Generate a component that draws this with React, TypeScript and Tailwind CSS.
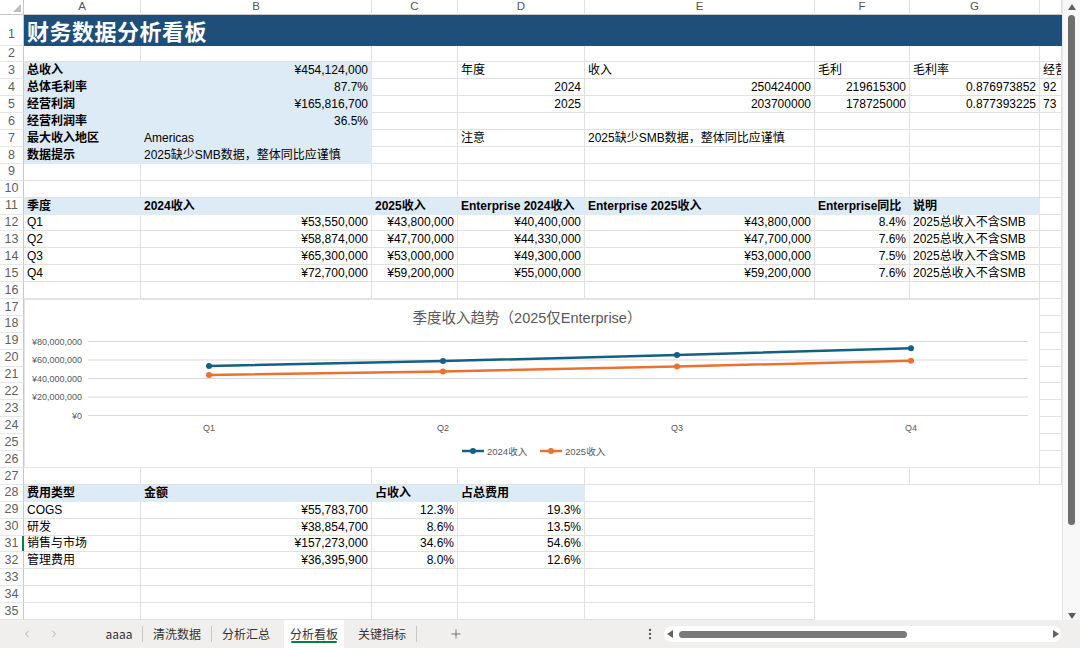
import React from 'react';
import clsx from 'clsx';
import { ChevronLeft, ChevronRight, Plus, EllipsisVertical } from 'lucide-react';

type Cell = { v?: string; r?: boolean; b?: boolean; fill?: boolean; none?: boolean };

const colW = ['w-[117px]', 'w-[231px]', 'w-[86px]', 'w-[127px]', 'w-[230px]', 'w-[95px]', 'w-[130px]', 'w-[22px]'];
const letters = ['A', 'B', 'C', 'D', 'E', 'F', 'G', ''];

const t = (v: string): Cell => ({ v });
const n = (v: string): Cell => ({ v, r: true });
const fb = (v: string): Cell => ({ v, b: true, fill: true });
const fn = (v: string): Cell => ({ v, r: true, fill: true });
const ft = (v: string): Cell => ({ v, fill: true });
const E: Cell = {};
const X: Cell = { none: true };

const rows: Record<number, Cell[]> = {
  3: [fb('总收入'), fn('¥454,124,000'), E, t('年度'), t('收入'), t('毛利'), t('毛利率'), t('经营利润')],
  4: [fb('总体毛利率'), fn('87.7%'), E, n('2024'), n('250424000'), n('219615300'), n('0.876973852'), t('92')],
  5: [fb('经营利润'), fn('¥165,816,700'), E, n('2025'), n('203700000'), n('178725000'), n('0.877393225'), t('73')],
  6: [fb('经营利润率'), fn('36.5%')],
  7: [fb('最大收入地区'), ft('Americas'), E, t('注意'), t('2025缺少SMB数据，整体同比应谨慎')],
  8: [fb('数据提示'), ft('2025缺少SMB数据，整体同比应谨慎')],
  11: [fb('季度'), fb('2024收入'), fb('2025收入'), fb('Enterprise 2024收入'), fb('Enterprise 2025收入'), fb('Enterprise同比'), fb('说明')],
  12: [t('Q1'), n('¥53,550,000'), n('¥43,800,000'), n('¥40,400,000'), n('¥43,800,000'), n('8.4%'), t('2025总收入不含SMB')],
  13: [t('Q2'), n('¥58,874,000'), n('¥47,700,000'), n('¥44,330,000'), n('¥47,700,000'), n('7.6%'), t('2025总收入不含SMB')],
  14: [t('Q3'), n('¥65,300,000'), n('¥53,000,000'), n('¥49,300,000'), n('¥53,000,000'), n('7.5%'), t('2025总收入不含SMB')],
  15: [t('Q4'), n('¥72,700,000'), n('¥59,200,000'), n('¥55,000,000'), n('¥59,200,000'), n('7.6%'), t('2025总收入不含SMB')],
  28: [fb('费用类型'), fb('金额'), fb('占收入'), fb('占总费用'), E, X, X, X],
  29: [t('COGS'), n('¥55,783,700'), n('12.3%'), n('19.3%'), E, X, X, X],
  30: [t('研发'), n('¥38,854,700'), n('8.6%'), n('13.5%'), E, X, X, X],
  31: [t('销售与市场'), n('¥157,273,000'), n('34.6%'), n('54.6%'), E, X, X, X],
  32: [t('管理费用'), n('¥36,395,900'), n('8.0%'), n('12.6%'), E, X, X, X],
  33: [E, E, E, E, E, X, X, X],
  34: [E, E, E, E, E, X, X, X],
  35: [E, E, E, E, E, X, X, X],
};

const RowHead = ({ num, active }: { num: number; active?: boolean }) => (
  <div className="relative w-[24px] shrink-0 h-[16.9px] flex items-center justify-center border-r border-b border-r-[#c8c8c8] border-b-[#e6e6e6] text-[12.5px] text-[#5f5f5f]">
    {num}
    {active && <span className="absolute right-[-1px] top-0 h-full w-[2px] bg-[#107c41]" />}
  </div>
);

const CellBox = ({ c, w }: { c: Cell; w: string }) => (
  <div
    className={clsx(
      w,
      'shrink-0 h-full border-r border-b px-[3px] overflow-hidden whitespace-nowrap flex items-center',
      c.none ? 'border-transparent' : c.fill ? 'border-[#ddebf7] bg-[#ddebf7]' : 'border-[#e1e1e1]',
      c.r ? 'justify-end' : 'justify-start',
      c.b && 'font-bold'
    )}
  >
    {c.v}
  </div>
);

const SheetRow = ({ num }: { num: number }) => {
  const cells = rows[num] ?? [];
  return (
    <div className="flex h-[16.9px]">
      <RowHead num={num} active={num === 31} />
      {colW.map((w, i) => (
        <CellBox key={i} c={cells[i] ?? E} w={w} />
      ))}
    </div>
  );
};

const s24 = [53.55, 58.874, 65.3, 72.7];
const s25 = [43.8, 47.7, 53.0, 59.2];
const xs = [185, 419, 653, 887];
const yv = (v: number) => 116.5 - (v / 80) * 74;
const font = "'Liberation Sans','Noto Sans CJK SC',sans-serif";

const Chart = () => (
  <svg width="1016" height="169" viewBox="0 0 1016 169" fontFamily={font}>
    <rect x="0.5" y="0.5" width="1015" height="168" fill="#fff" stroke="#e4e4e4" />
    <text x="503" y="24" textAnchor="middle" fontSize="14.5" fill="#595959">
      季度收入趋势（2025仅Enterprise）
    </text>
    {[80, 60, 40, 20, 0].map((v) => (
      <g key={v}>
        <line x1="64" x2="1004" y1={yv(v)} y2={yv(v)} stroke="#d9d9d9" strokeWidth="1" />
        <text x="58" y={yv(v) + 3} textAnchor="end" fontSize="9" fill="#595959">
          {v === 0 ? '¥0' : `¥${v},000,000`}
        </text>
      </g>
    ))}
    {['Q1', 'Q2', 'Q3', 'Q4'].map((q, i) => (
      <text key={q} x={xs[i]} y="132" textAnchor="middle" fontSize="9" fill="#595959">
        {q}
      </text>
    ))}
    {[
      { d: s24, c: '#156082' },
      { d: s25, c: '#e97132' },
    ].map((s) => (
      <g key={s.c}>
        <polyline
          points={s.d.map((v, i) => `${xs[i]},${yv(v)}`).join(' ')}
          fill="none"
          stroke={s.c}
          strokeWidth="2.5"
          strokeLinejoin="round"
        />
        {s.d.map((v, i) => (
          <circle key={i} cx={xs[i]} cy={yv(v)} r="3" fill={s.c} />
        ))}
      </g>
    ))}
    <line x1="438" x2="460" y1="152" y2="152" stroke="#156082" strokeWidth="2.5" />
    <circle cx="449" cy="152" r="3" fill="#156082" />
    <text x="463" y="155.5" fontSize="9.5" fill="#595959">2024收入</text>
    <line x1="516" x2="538" y1="152" y2="152" stroke="#e97132" strokeWidth="2.5" />
    <circle cx="527" cy="152" r="3" fill="#e97132" />
    <text x="541" y="155.5" fontSize="9.5" fill="#595959">2025收入</text>
  </svg>
);

const Tri = ({ dir }: { dir: 'up' | 'down' | 'left' | 'right' }) => {
  const pts = {
    up: '0,6 4,0 8,6',
    down: '0,0 8,0 4,6',
    left: '6,0 6,8 0,4',
    right: '0,0 0,8 6,4',
  }[dir];
  const vertical = dir === 'up' || dir === 'down';
  return (
    <svg width={vertical ? 8 : 6} height={vertical ? 6 : 8} className="shrink-0">
      <polygon points={pts} fill="#606060" />
    </svg>
  );
};

export default function App() {
  const chartRows = Array.from({ length: 10 }, (_, i) => 17 + i);
  return (
    <div className="w-[1080px] h-[648px] overflow-hidden bg-white text-[12px] text-black font-['Liberation_Sans','Noto_Sans_CJK_SC',sans-serif] flex flex-col">
      <div className="flex h-[620.2px] shrink-0">
        <div className="w-[1062px] flex flex-col">
          {/* column headers */}
          <div className="flex h-[15px] shrink-0">
            <div className="w-[24px] shrink-0 border-r border-b border-[#c8c8c8] flex items-end justify-end pr-[2px] pb-[2px]">
              <svg width="8" height="8">
                <polygon points="8,0 8,8 0,8" fill="#bdbdbd" />
              </svg>
            </div>
            {colW.map((w, i) => (
              <div
                key={i}
                className={clsx(w, 'shrink-0 border-r border-b border-r-[#e1e1e1] border-b-[#c8c8c8] flex items-center justify-center text-[11.5px] text-[#555]')}
              >
                {letters[i]}
              </div>
            ))}
          </div>

          {/* row 1 title */}
          <div className="flex h-[30.6px] shrink-0">
            <div className="w-[24px] shrink-0 border-r border-b border-r-[#c8c8c8] border-b-[#e6e6e6] flex items-end justify-center pb-[1px] text-[12.5px] text-[#5f5f5f]">
              1
            </div>
            <div className="w-[1038px] bg-[#1f4e78] flex items-center pl-[3px] text-white text-[22px] font-bold font-['Noto_Sans_CJK_SC',sans-serif] tracking-[0.5px]">
              财务数据分析看板
            </div>
          </div>

          {Array.from({ length: 15 }, (_, i) => i + 2).map((r) => (
            <SheetRow key={r} num={r} />
          ))}

          {/* chart rows 17-26 */}
          <div className="flex h-[169px] shrink-0">
            <div className="flex flex-col">
              {chartRows.map((r) => (
                <RowHead key={r} num={r} />
              ))}
            </div>
            <div className="w-[1016px] shrink-0">
              <Chart />
            </div>
            <div className="flex flex-col w-[22px]">
              {chartRows.map((r) => (
                <div key={r} className="h-[16.9px] border-r border-b border-[#e1e1e1]" />
              ))}
            </div>
          </div>

          {Array.from({ length: 9 }, (_, i) => i + 27).map((r) => (
            <SheetRow key={r} num={r} />
          ))}
        </div>

        {/* vertical scrollbar */}
        <div className="w-[18px] shrink-0 bg-[#f8f8f8] border-l border-[#e6e6e6] flex flex-col items-center pt-[4px] pb-[1px]">
          <Tri dir="up" />
          <div className="mt-[5px] h-[510px] w-[7px] rounded-full bg-[#6e6e6e]" />
          <div className="flex-1" />
          <Tri dir="down" />
        </div>
      </div>

      {/* sheet tabs */}
      <div className="flex-1 flex items-center bg-[#f0efed] text-[12px] text-[#333] font-['Noto_Sans_CJK_SC','Liberation_Sans',sans-serif]">
        <div className="w-[96px] shrink-0 flex items-center pl-[21px] gap-[15px] text-[#9a9a9a]">
          <ChevronLeft size={12} strokeWidth={1.5} />
          <ChevronRight size={12} strokeWidth={1.5} />
        </div>
        <div className="flex items-center h-full">
          <div className="w-[46px] text-center">aaaa</div>
          <div className="w-px h-[16px] bg-[#c8c6c4]" />
          <div className="w-[68px] text-center">清洗数据</div>
          <div className="w-px h-[16px] bg-[#c8c6c4]" />
          <div className="w-[68px] text-center">分析汇总</div>
          <div className="ml-[4px] w-[60px] h-full bg-white flex flex-col items-center justify-center relative">
            <span>分析看板</span>
            <span className="absolute bottom-[5px] left-[7px] right-[7px] h-[2px] rounded-full bg-[#107c41]" />
          </div>
          <div className="ml-[4px] w-[68px] text-center">关键指标</div>
          <div className="w-px h-[16px] bg-[#c8c6c4]" />
        </div>
        <Plus size={14} strokeWidth={1.5} className="ml-[32px] text-[#666]" />
        <EllipsisVertical size={14} strokeWidth={2} className="ml-[180px] text-[#555]" />
        <div className="ml-[7px] w-[397px] h-[16px] bg-white rounded-full flex items-center pl-[3px] pr-[2px]">
          <Tri dir="left" />
          <div className="ml-[6px] w-[228px] h-[7px] rounded-full bg-[#7a7a7a]" />
          <div className="flex-1" />
          <Tri dir="right" />
        </div>
      </div>
    </div>
  );
}
